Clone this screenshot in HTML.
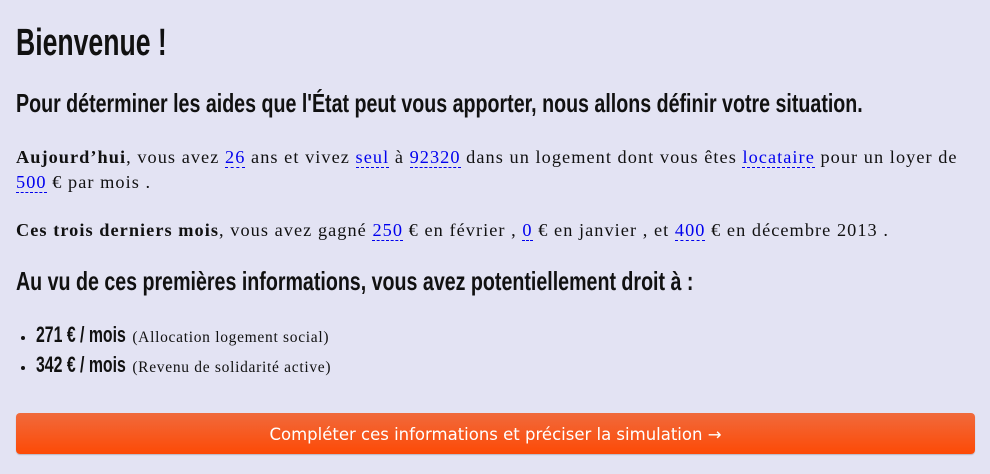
<!DOCTYPE html>
<html><head><meta charset="utf-8"><style>
body{margin:0;background:#e3e3f3;width:990px;height:474px;overflow:hidden;font-family:"Liberation Serif",serif;color:#111;}
h1,h2,.amt{font-family:"Liberation Sans",sans-serif;font-weight:bold;color:#111;transform-origin:0 50%;}
h1{font-size:38px;margin:0;position:absolute;top:22px;left:16px;transform:scaleX(0.70);white-space:nowrap}
h2{font-size:26px;margin:0;position:absolute;left:16px;white-space:nowrap;transform:scaleX(0.755)}
p{position:absolute;left:16px;margin:0;font-size:18.3px;letter-spacing:1.05px;line-height:25px;width:965px}
a{color:#0000ee;text-decoration:none;border-bottom:1px dashed #0000ee}
ul{position:absolute;left:0;top:321px;margin:0;padding-left:36px;font-size:15.5px;letter-spacing:0.7px;line-height:27px}
.amt{font-size:22px;display:inline-block;transform:scaleX(0.72);letter-spacing:0;margin-right:-33px}
.btn{position:absolute;left:16px;top:413px;width:959px;height:41px;border-radius:4px;background:linear-gradient(#f06a3c,#fd4a06);color:#fff;font-family:"DejaVu Sans",sans-serif;font-size:16.5px;text-align:center;line-height:44px;box-shadow:0 1px 1px rgba(0,0,0,.2)}
</style></head><body>
<h1>Bienvenue !</h1>
<h2 style="top:88px">Pour déterminer les aides que l'État peut vous apporter, nous allons définir votre situation.</h2>
<p style="top:145px"><b>Aujourd’hui</b>, vous avez <a>26</a> ans et vivez <a>seul</a> à <a>92320</a> dans un logement dont vous êtes <a>locataire</a> pour un loyer de <a>500</a> € par mois .</p>
<p style="top:218px"><b>Ces trois derniers mois</b>, vous avez gagné <a>250</a> € en février , <a>0</a> € en janvier , et <a>400</a> € en décembre 2013 .</p>
<h2 style="top:266px">Au vu de ces premières informations, vous avez potentiellement droit à :</h2>
<ul><li><span class="amt">271 € / mois</span> (Allocation logement social)</li><li><span class="amt">342 € / mois</span> (Revenu de solidarité active)</li></ul>
<div class="btn">Compléter ces informations et préciser la simulation →</div>
</body></html>
